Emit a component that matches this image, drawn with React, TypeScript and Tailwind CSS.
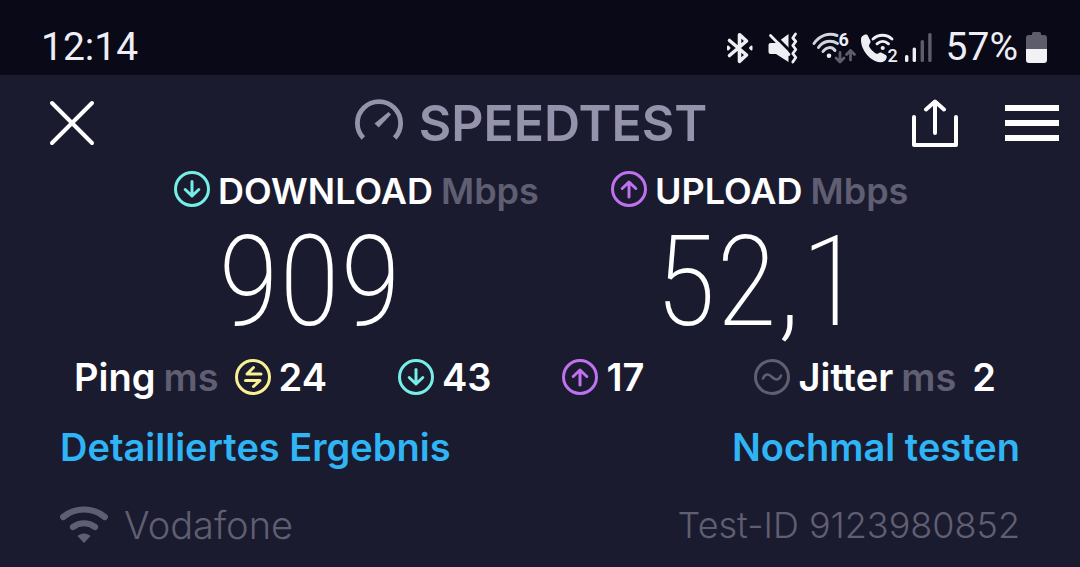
import React from 'react';

type IconProps = { className?: string };

function BluetoothIcon() {
  return (
    <svg width="28" height="32" viewBox="0 0 28 32" fill="none" stroke="#eeeef4" strokeWidth="3.6" strokeLinecap="round" strokeLinejoin="round">
      <path d="M3.5 8.5 20.5 23 13.5 29.3V2.7L20.5 9 3.5 23.5" />
      <path d="M2 14.5v3L3.500 16zM25.500 14.500v3L24 16z" strokeWidth="2" fill="#eeeef4" />
    </svg>
  );
}

function MuteIcon() {
  return (
    <svg width="30" height="32" viewBox="0 0 30 32" fill="none" strokeLinecap="round" strokeLinejoin="round">
      <path d="M2.500 11h6L20.500 2v28L8 22H2.500A2 2 0 0 1 .5 20v-7a2 2 0 0 1 2-2z" fill="#eeeef4" />
      <path d="M5 2 22 19" stroke="#090917" strokeWidth="3" />
      <path d="M2.500 3.500 21 22.500" stroke="#eeeef4" strokeWidth="2.800" />
      <path d="M27.500 2 24.800 6l3 3.500-3 4 3 4-3 4 3 4-3 4.500" stroke="#eeeef4" strokeWidth="2.800" />
    </svg>
  );
}

function WifiSixIcon() {
  return (
    <svg className="overflow-visible" width="44" height="32" viewBox="0 0 44 32" fill="none" strokeLinecap="round">
      <g stroke="#d4d4dc" strokeWidth="3">
        <path d="M2 11.500C8 3 17 0.500 25 3.500" />
        <path d="M6.500 15.500C11 9 19 7.500 25.500 11.500" />
        <path d="M11 19.500c3.500-5 9-5 12-1" />
      </g>
      <circle cx="17" cy="23.800" r="2.300" fill="#eeeef4" />
      <text x="26.500" y="14" fill="#eeeef4" className="font-[Roboto] text-[18px] font-bold">6</text>
      <g stroke="#5d5d6b" strokeWidth="2.800" strokeLinejoin="round">
        <path d="M28 20.500v9.500M24 26 28 30l4-4" />
        <path d="M38.500 28v-9.500M34.500 22.500l4-4 4 4" />
      </g>
    </svg>
  );
}

function WifiCallIcon() {
  return (
    <svg className="overflow-visible" width="38" height="32" viewBox="0 0 38 32" fill="none" strokeLinecap="round">
      <path
        d="M0 7C.3 4.200 3 2.500 5 2.500c1 0 1.700.5 2 1.500l2.500 5c.8 1.800-1.800 3.500-1.500 5 1 3 5 6.500 7.500 7.700 1.500.3 2.700-1.800 4.700-1.200l4.500 2.500c1.300.8 1.300 2 .8 3.200-1 2.800-3.500 4.300-6.500 4C9.500 29.500-.5 18 0 7z"
        fill="#eeeef4"
      />
      <g stroke="#eeeef4" strokeWidth="2.900">
        <path d="M12 7c5.500-5 13.500-5 19 0" />
        <path d="M16 11.800c3.500-3 8-3 11.500 0" />
      </g>
      <circle cx="21.700" cy="16" r="2.100" fill="#eeeef4" />
      <text x="26.500" y="30" fill="#eeeef4" className="font-[Roboto] text-[18px] font-medium">2</text>
    </svg>
  );
}

function SignalIcon() {
  return (
    <svg width="28" height="32" viewBox="0 0 28 32">
      <rect x="1" y="23" width="3.400" height="7" rx="1.500" fill="#eeeef4" />
      <rect x="8.600" y="15.500" width="3.400" height="14.500" rx="1.500" fill="#eeeef4" />
      <rect x="16.600" y="8" width="3.400" height="22" rx="1.500" fill="#5d5d6b" />
      <rect x="24.200" y="1" width="3.400" height="29" rx="1.500" fill="#5d5d6b" />
    </svg>
  );
}

function BatteryIcon() {
  return (
    <svg width="21" height="32" viewBox="0 0 21 32">
      <path d="M7.500 0h6a1.500 1.500 0 0 1 1.500 1.500V3h3a3 3 0 0 1 3 3v11H0V6a3 3 0 0 1 3-3h3V1.500A1.500 1.500 0 0 1 7.500 0z" fill="#5d5d6b" />
      <path d="M0 17h21v11a3 3 0 0 1-3 3H3a3 3 0 0 1-3-3z" fill="#f2f2f6" />
    </svg>
  );
}

function GaugeIcon() {
  return (
    <svg width="48" height="48" viewBox="0 0 48 48" fill="none">
      <path d="M8.300 39A21.600 21.600 0 1 1 39.700 39" stroke="#9593ab" strokeWidth="4.800" />
      <path d="M33.500 13 36 15.500 23.700 28.500 19.500 24.500z" fill="#9593ab" />
    </svg>
  );
}

function CircleIcon({ className, children }: IconProps & { children: React.ReactNode }) {
  return (
    <svg className={className} width="36" height="36" viewBox="0 0 36 36" fill="none" stroke="currentColor" strokeWidth="3" strokeLinecap="round" strokeLinejoin="round">
      <circle cx="18" cy="18" r="16.500" />
      {children}
    </svg>
  );
}

function DownIcon() {
  return (
    <CircleIcon className="shrink-0 text-[#75eee6]">
      <path d="M18 10.500V25M11.200 18.500 18 25l6.800-6.500" />
    </CircleIcon>
  );
}

function UpIcon() {
  return (
    <CircleIcon className="shrink-0 text-[#bf71f0]">
      <path d="M18 26V11M11.200 17.500 18 11l6.800 6.500" />
    </CircleIcon>
  );
}

function PingIcon() {
  return (
    <CircleIcon className="shrink-0 text-[#f8f093]">
      <path d="M26 15H12l6.500-6.500M10.500 21.500H25L18.500 27.500" />
    </CircleIcon>
  );
}

function JitterIcon() {
  return (
    <CircleIcon className="shrink-0 text-[#5f5e72]">
      <path d="M9 19.500c2-5 5.500-5 9-1.500s7 3.500 9-1.500" strokeWidth="2.500" />
    </CircleIcon>
  );
}

function NetworkIcon() {
  return (
    <svg width="48" height="38" viewBox="0 0 48 38" fill="none" stroke="#605f72" strokeWidth="6.200" strokeLinecap="round">
      <path d="M3.200 11c12-10 29.600-10 41.600 0" />
      <path d="M13 21c6.500-5 15.500-5 22 0" />
      <path d="M17.500 30c3.500-3.500 9.500-3.500 13 0L24 37z" fill="#605f72" stroke="none" />
    </svg>
  );
}

interface SpeedProps {
  icon: React.ReactNode;
  label: string;
  value: string;
}

function Speed({ icon, label, value }: SpeedProps) {
  return (
    <div className="pl-[71px]">
      <div className="flex h-9 items-center gap-2">
        {icon}
        <h2 className="flex gap-2 pt-1 text-[36px] leading-9 font-semibold">
          {label} <span className="text-[#5f5e72]">Mbps</span>
        </h2>
      </div>
      <p className="pt-2 pl-11 font-['Roboto_Condensed',Roboto,sans-serif] text-[126px] leading-[134px] font-extralight">
        {value}
      </p>
    </div>
  );
}

export default function App() {
  return (
    <div className="min-h-screen bg-[#1b1b2f] font-[Inter,sans-serif] text-white">
      <div className="flex h-[75px] items-center justify-between bg-[#090917] pt-5 pr-[33px] pl-[41px] font-[Roboto,sans-serif] text-[39px] text-[#eeeef4]">
        <span>12:14</span>
        <div className="flex items-center gap-2">
          <div className="flex items-center gap-[14px]">
            <BluetoothIcon />
            <MuteIcon />
            <div className="flex items-center gap-[5px]">
              <WifiSixIcon />
              <WifiCallIcon />
              <SignalIcon />
            </div>
            <span>57%</span>
          </div>
          <BatteryIcon />
        </div>
      </div>

      <header className="grid h-24 grid-cols-[1fr_auto_1fr] items-center px-[21px]">
        <button type="button" aria-label="Schließen" className="justify-self-start pl-7">
          <svg width="46" height="46" viewBox="0 0 46 46" stroke="white" strokeWidth="4" strokeLinecap="round">
            <path d="M3 3 43 43M43 3 3 43" />
          </svg>
        </button>
        <div className="flex items-center gap-4 pr-[18px] text-[#9593ab]">
          <GaugeIcon />
          <h1 className="text-[50px] leading-[56px] font-semibold">SPEEDTEST</h1>
        </div>
        <div className="flex items-center gap-[46px] justify-self-end">
          <button type="button" aria-label="Teilen">
            <svg width="48" height="48" viewBox="0 0 48 48" fill="none" stroke="white" strokeWidth="4" strokeLinecap="round" strokeLinejoin="round">
              <path d="M3 18v28h42V18M24 34V3M15 10.500 24 2.500l9 8" />
            </svg>
          </button>
          <button type="button" aria-label="Menü" className="flex flex-col gap-[9px]">
            <span className="h-[6px] w-[54px] bg-white" />
            <span className="h-[6px] w-[54px] bg-white" />
            <span className="h-[6px] w-[54px] bg-white" />
          </button>
        </div>
      </header>

      <main>
        <section className="grid grid-cols-2 px-[103px]">
          <Speed icon={<DownIcon />} label="DOWNLOAD" value="909" />
          <Speed icon={<UpIcon />} label="UPLOAD" value="52,1" />
        </section>

        <section className="flex h-14 items-center gap-[71px] pr-[84px] pl-[74px] text-[38px] font-semibold">
          <div className="flex items-center gap-2">
            <span>Ping</span>
            <span className="pr-2 text-[#5f5e72]">ms</span>
            <PingIcon />
            <span>24</span>
          </div>
          <div className="flex items-center gap-2">
            <DownIcon />
            <span>43</span>
          </div>
          <div className="flex items-center gap-2">
            <UpIcon />
            <span>17</span>
          </div>
          <div className="ml-auto flex items-center gap-2">
            <JitterIcon />
            <span>Jitter</span>
            <span className="pr-2 text-[#5f5e72]">ms</span>
            <span>2</span>
          </div>
        </section>

        <nav className="mt-[14px] flex h-14 items-center justify-between px-[60px] text-[38px] font-semibold text-[#2fb4f5]">
          <a href="#details">Detailliertes Ergebnis</a>
          <a href="#retry">Nochmal testen</a>
        </nav>
      </main>

      <footer className="mt-[22px] flex h-14 items-center justify-between px-[60px] text-[36px] font-light text-[#605f72]">
        <div className="flex items-center gap-4">
          <NetworkIcon />
          <span className="text-[38px]">Vodafone</span>
        </div>
        <span>Test-ID 9123980852</span>
      </footer>
    </div>
  );
}
